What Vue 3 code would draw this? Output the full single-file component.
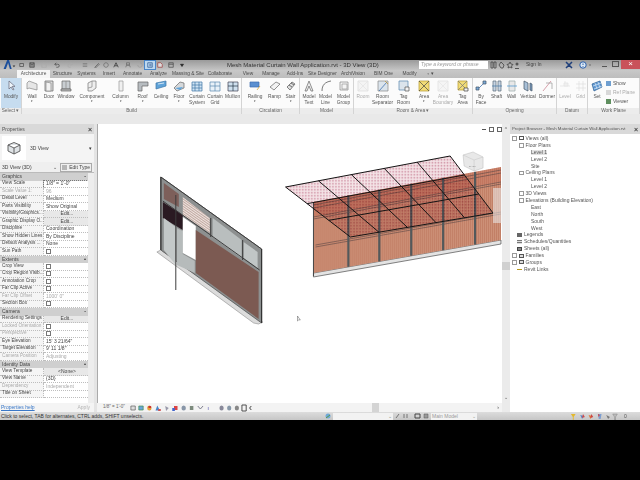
<template>
  <div class="app">
    <div class="titlebar">
      <svg class="logo" viewBox="0 0 14 10"><path d="M1 10 5 0h2l3 10H8L6 3 3.500 10z" fill="#1c4f9c"/><path d="M11 6h3l-1.500 2z" fill="#333"/></svg>
      <div class="qat">
        <span v-for="q in qat" :key="q.x" class="qat-icon" :class="{ on: q.on }" :style="{ width: q.w + 'px', background: q.on ? '#bcd8f0' : '' }">
          <svg viewBox="0 0 8 8"><path :d="q.d" :fill="q.f || 'none'" :stroke="q.s || '#444'" stroke-width="0.9"/></svg>
        </span>
      </div>
      <div class="doc-title">Mesh Material Curtain Wall Application.rvt - 3D View (3D)</div>
      <div class="search"><i>Type a keyword or phrase</i></div>
      <div class="info">
        <svg viewBox="0 0 30 8" width="30" height="8"><path d="M1 1h2v6H1zM4 1h2v6H4zM11 1l3 3-1 3h-2L9 4zM20 1l1 2 2 .500-1.500 1.500.5 2-2-1-2 1 .5-2L17 3.500l2-.5z" fill="none" stroke="#444" stroke-width=".8"/><circle cx="27" cy="3" r="1.500" fill="#555"/><path d="M25 7.500h4" stroke="#555"/></svg>
        <span>Sign In</span>
      </div>
      <svg class="x-mark" viewBox="0 0 28 8" width="28" height="8"><path d="M2 1l3 3-3 3M8 1 5 4l3 3" stroke="#1f3f7a" fill="none" stroke-width="1.500"/><circle cx="19" cy="4" r="3.200" fill="#dbe7f3" stroke="#2a5ea8"/><path d="M19 2.500v1.500M19 5v.800" stroke="#2a5ea8"/><circle cx="26" cy="4" r=".7" fill="#555"/></svg>
      <div class="win-btns">
        <span class="min"></span>
        <span class="max"></span>
        <span class="close">×</span>
      </div>
    </div>

    <div class="tabs">
      <span v-for="t in tabs" :key="t.n" class="tab" :class="{ active: t.n === 'Architecture' }" :style="{ width: t.w + 'px' }">{{ t.n }}</span>
    </div>

    <div class="ribbon">
      <div v-for="p in panels" :key="p.name" class="panel" :style="{ width: p.w + 'px' }">
        <div class="tools">
          <div v-for="t in p.tools" :key="t.l + t.i" class="tool" :class="{ sel: t.l === 'Modify', off: t.off }" :style="{ width: t.w + 'px' }">
            <svg class="tool-icon" viewBox="0 0 12 12" width="12" height="12">
              <path v-for="(s, i) in icons[t.i]" :key="i" :d="s[0]" :fill="s[1]" :stroke="s[2]" stroke-width="0.7"/>
            </svg>
            <span class="tool-label">{{ t.l }}</span>
            <span v-if="t.l2" class="tool-label">{{ t.l2 }}</span>
            <span v-if="t.more" class="more">▾</span>
          </div>
          <div v-if="p.name === 'Work Plane'" class="wp-list">
            <span><b class="sq blue"></b>Show</span>
            <span class="off"><b class="sq grey"></b>Ref Plane</span>
            <span><b class="sq green"></b>Viewer</span>
          </div>
        </div>
        <div class="panel-label">{{ p.name }}</div>
      </div>
    </div>

    <div class="strip"></div>

    <div class="main">
      <aside class="props">
        <div class="pane-head"><span>Properties</span><b>×</b></div>
        <div class="type-sel">
          <div class="type-thumb">
            <svg viewBox="0 0 14 14" width="14" height="14"><path d="M7 1.500 13 4v6l-6 3-6-3V4z M1 4l6 3 6-3M7 7v6" fill="#dfe3e6" stroke="#555" stroke-width=".9"/></svg>
          </div>
          <span>3D View</span>
          <em>▾</em>
        </div>
        <div class="inst">
          <span>3D View (3D)</span>
          <em>⌄</em>
          <span class="edit-type"><b class="sq grey"></b>Edit Type</span>
        </div>
        <div class="grid">
          <div class="rows">
            <div v-for="r in rows" :key="r.n" class="row" :class="{ head: r.h, muted: r.m }">
              <template v-if="r.h">
                <span>{{ r.n }}</span>
                <em>{{ r.h === 2 ? '▴' : '▪' }}</em>
              </template>
              <template v-else>
                <span class="cell name">{{ r.n }}</span>
                <span class="cell val" :class="{ btn: r.b, white: r.w }">
                  <b v-if="r.c" class="check"></b>
                  {{ r.v }}
                </span>
              </template>
            </div>
          </div>
          <div class="vscroll"></div>
        </div>
        <div class="prop-foot">
          <span class="help">Properties help</span>
          <span class="apply">Apply</span>
        </div>
      </aside>

      <section class="view">
        <div class="canvas">
          <svg class="model" viewBox="97 124 405 279" preserveAspectRatio="none">
            <defs>
              <pattern id="stripes" width="2" height="4" patternUnits="userSpaceOnUse">
                <rect width="2" height="4" fill="#cd9178"/>
                <rect width="0.8" height="4" fill="#c07a62"/>
              </pattern>
              <pattern id="hatch" width="1.500" height="1.500" patternUnits="userSpaceOnUse">
                <rect width="1.500" height="1.500" fill="#f4e4e7"/>
                <rect width=".75" height=".75" fill="#cf8fa2"/>
              </pattern>
              <pattern id="lines" width="3" height="2" patternUnits="userSpaceOnUse" patternTransform="rotate(35)">
                <rect width="3" height="2" fill="#efe4e0"/>
                <rect width="3" height=".8" fill="#b59a92"/>
              </pattern>
            </defs>

            <!-- left wall -->
            <polygon points="156,252 160,250 262,322 258,324 253,323" fill="#dcdcdc" stroke="#777" stroke-width=".5"/>
            <polygon points="160,177 261,249 261,323 160,250" fill="#8d9090" stroke="#4a4a4a" stroke-width=".7"/>
            <polygon points="163,183 178,194 178,207 163,199" fill="#7d5f5a"/>
            <polygon points="162,202 182,215 182,230 162,218" fill="#2a1a22"/>
            <polygon points="163,218 175,227 175,265 163,250" fill="#c3c8c8"/>
            <polygon points="176,228 182,231 182,254 194,261 194,273 176,265" fill="#b6bbbb"/>
            <polygon points="182,197 209,218 209,233 182,215" fill="url(#lines)"/>
            <polygon points="182,217 195,226 195,260 182,253" fill="#ffffff"/>
            <polygon points="195,230 258,272 258,319 195,273" fill="#7c5a52"/>
            <polygon points="212,218 241,240 241,258 212,237" fill="#b9bebe"/>
            <polygon points="243,242 257,252 257,268 243,258" fill="#c1c6c6"/>
            <path d="M160 177 261 249M175 195v95M210 218v19M242 240v20M162 201l97 69" fill="none" stroke="#3c3c3c" stroke-width="1"/>
            <path d="M160 177v73M261 249v74" fill="none" stroke="#333" stroke-width="1.200"/>

            <!-- right wall -->
            <polygon :points="wallBase" fill="#e3e3e3" stroke="#333" stroke-width=".6"/>
            <polygon :points="wallFace" fill="url(#stripes)"/>
            <polygon :points="wallUpper" fill="#c1604c" opacity=".3"/>
            <line v-for="(l, i) in transoms" :key="'t' + i" :x1="l[0]" :y1="l[1]" :x2="l[2]" :y2="l[3]" stroke="#5a4745" stroke-width=".6"/>
            <line v-for="x in mullions" :key="'m' + x" :x1="x" :y1="wallTop(x)" :x2="x" :y2="wallBottom(x)" stroke="#53595b" stroke-width="2.200"/>
            <line x1="313" y1="202" x2="313" y2="276" stroke="#444" stroke-width="1"/>

            <!-- canopy -->
            <polygon class="canopy-fill" points="285,187 450,156 493,213 350,237" fill="url(#hatch)"/>
            <line v-for="(l, i) in canopy" :key="'c' + i" :x1="l[0]" :y1="l[1]" :x2="l[2]" :y2="l[3]" stroke="#141414" stroke-width="1"/>

            <!-- view cube -->
            <polygon points="463,155 473,152 483,157 483,168 474,171 464,166" fill="#e8e8e8" stroke="#bbb" stroke-width=".5"/>
            <path d="M463 155l11 5 9-3M474 160v11" fill="none" stroke="#c4c4c4" stroke-width=".5"/>
            <text x="469" y="167" class="cube-text">BACK</text>
            <!-- nav bar -->
            <rect x="493" y="188" width="9" height="35" fill="#ececec" opacity=".55"/>
            <!-- cursor -->
            <path d="M297 316v5l1.300-1.200 1.500.200z" fill="#fff" stroke="#555" stroke-width=".5"/>
          </svg>
        </div>
        <div class="view-bar">
          <span class="scale">1/8" = 1'-0"</span>
          <svg viewBox="0 0 100 8" width="88" height="8" preserveAspectRatio="none">
            <path d="M1 2h5v4H1z" fill="#ddd" stroke="#555" stroke-width=".7"/>
            <path d="M10 2h5v4h-5z" fill="#6aa5d8" stroke="#3b8b4a" stroke-width=".7"/>
            <circle cx="22" cy="4" r="2.500" fill="#e3a03a"/><path d="M21 2h3v2h-3z" fill="#c33"/>
            <path d="M31 1.500l3 5h-5z" fill="#4a86c8"/><path d="M32 5h3v2h-3z" fill="#c55"/>
            <path d="M40 2l4 2-3 3z" fill="#99a" />
            <path d="M50 2h4v4h-4z" fill="#d44"/><path d="M48 4h3v3h-3z" fill="#46c"/>
            <circle cx="61" cy="4" r="2.500" fill="#8896a8"/>
            <path d="M68 2h4v4h-4z" fill="#7c8a7c"/>
            <path d="M77 2l3 3 3-3" fill="none" stroke="#778"/>
            <path d="M89 3v3" stroke="#99c"/>
          </svg>
          <svg viewBox="0 0 40 8" width="34" height="8" preserveAspectRatio="none">
            <circle cx="3" cy="4" r="2.500" fill="#889"/><circle cx="12" cy="4" r="2.500" fill="#8898a8"/><circle cx="21" cy="4" r="2.500" fill="#888"/><path d="M27 1h5v6h-5z" fill="none" stroke="#444"/><path d="M38 2l-2 2 2 2" fill="none" stroke="#333"/>
          </svg>
          <div class="hscroll"><b></b></div>
          <span class="arrow">›</span>
        </div>
      </section>

      <div class="gutter">
        <div class="view-ctrl"><span></span><span class="box"></span><span class="box"></span><span>^</span></div>
        <b></b>
        <em>⌄</em>
      </div>

      <aside class="browser">
        <div class="pane-head"><span>Project Browser - Mesh Material Curtain Wall Application.rvt</span><b>×</b></div>
        <div class="tree">
          <div v-for="(n, i) in tree" :key="i" class="node" :class="{ cur: n.cur }" :style="{ paddingLeft: n.x + 'px' }">
            <b v-if="n.e" class="exp"></b>
            <b v-if="n.k" class="ico" :class="n.k"></b>
            <span>{{ n.t }}</span>
          </div>
        </div>
      </aside>
    </div>

    <div class="status">
      <span class="status-text">Click to select, TAB for alternates, CTRL adds, SHIFT unselects.</span>
      <svg class="st-a" viewBox="0 0 6 6" width="6" height="6"><circle cx="3" cy="3" r="2.500" fill="#6fa8d8"/><path d="M1 5l4-3" stroke="#5a9a4a"/></svg>
      <span class="combo wide">⌄</span>
      <svg viewBox="0 0 34 6" width="34" height="6"><path d="M1 5l3-4M9 1v4M12 1v4" stroke="#777" fill="none"/><path d="M20 1h5v4h-5z" fill="none" stroke="#444"/><path d="M29 1h4v4h-4z" fill="#999" stroke="#555" stroke-width=".5"/></svg>
      <span class="combo model">Main Model<em>⌄</em></span>
      <svg class="st-f" viewBox="0 0 56 7" width="52" height="7" preserveAspectRatio="none">
        <path d="M1 1h5L4 4v3H3V4z" fill="#e3b92d"/><path d="M11 2l4 1-2 3z" fill="#5a86c8"/><path d="M14 1l2 3-3 1z" fill="#d04a4a"/>
        <path d="M20 2l4 1-2 3z" fill="#e07a3a"/><path d="M23 1l2 3-3 1z" fill="#c44"/>
        <path d="M30 1h4l-1 5h-2z" fill="#7d9ed0"/><path d="M30 1l2 1-1 2z" fill="#d33"/>
        <path d="M39 2l4 2-2 2z" fill="#777"/><path d="M46 1h5l-2 3v3h-1V4z" fill="#bbb" stroke="#777" stroke-width=".4"/>
      </svg>
      <span class="zero">0</span>
    </div>
  </div>
</template>

<script setup>
const qat = [
  { x: 1, w: 10, d: "M1 2h5v4H1z" },
  { x: 2, w: 10, d: "M1 1h6v6H1zM2.500 1v2h3V1", f: "#888" },
  { x: 3, w: 13, d: "M1 4a3 3 0 0 1 6 0v3H1z", s: "#aaa" },
  { x: 4, w: 13, d: "M1 3h4a2 2 0 0 1 0 4H3M1 3l2-2M1 3l2 2" },
  { x: 5, w: 14, d: "M7 3H3a2 2 0 0 0 0 4h2M7 3 5 1M7 3 5 5", s: "#aaa" },
  { x: 6, w: 15, d: "M1 2h6M1 4h6M1 6h6", s: "#777" },
  { x: 7, w: 9, d: "M1 7 6 2l1 1-5 5z", s: "#555" },
  { x: 8, w: 10, d: "M1 4c0-4 6-4 6 0s-6 4-6 0", s: "#666" },
  { x: 9, w: 10, d: "M1 7 4 1l3 6M2.500 5h3", s: "#222" },
  { x: 10, w: 14, d: "M2 1h4v3H2zM1 7a3 3 0 0 1 6 0", s: "#666" },
  { x: 11, w: 10, d: "M1 4a3 3 0 1 0 3-3", s: "#999" },
  { x: 12, w: 10, on: true, d: "M1 1h6v6H1zM3 3h3M3 5h3", s: "#234f8a" },
  { x: 13, w: 10, d: "M1 1h4l2 2v4H1z", f: "#ddd", s: "#933" },
  { x: 14, w: 12, d: "M1 1h6v6H1zM1 3h6", s: "#444" },
  { x: 15, w: 10, d: "M2 3h4L4 6z", f: "#222", s: "#222" },
];

const tabs = [
  { n: "Architecture", w: 33 }, { n: "Structure", w: 25 }, { n: "Systems", w: 23 }, { n: "Insert", w: 22 },
  { n: "Annotate", w: 25 }, { n: "Analyze", w: 27 }, { n: "Massing & Site", w: 32 }, { n: "Collaborate", w: 32 },
  { n: "View", w: 24 }, { n: "Manage", w: 22 }, { n: "Add-Ins", w: 26 }, { n: "Site Designer", w: 29 },
  { n: "ArchiVision", w: 32 }, { n: "BIM One", w: 29 }, { n: "Modify", w: 23 }, { n: "▫ ▾", w: 19 },
];

const G = "#b9b9b9", D = "#666", B = "#5fa3d9", W = "#f2f2f2", Y = "#f1dc78";
const icons = {
  arrow: [["M4 1v8l2-2 2 3 1-.6-2-3h3z", "#eef5fb", "#667"]],
  wall: [["M1 3 3 1l8 3v6l-8-2-2 1z", "#e6e6e6", "#888"]],
  door: [["M2 1h8v10H2z", "#ddd", D], ["M3 2l5 1v8H3z", W, "#888"]],
  window: [["M2 1h8v8H2z", "#c9ced2", D], ["M1 9h10v2H1z", G, D], ["M6 1v8", "none", "#888"]],
  comp: [["M2 3l4-2h4v7l-4 3H2z", "#eee", "#777"], ["M6 1v6l-4 1", "none", "#888"]],
  column: [["M4 1h4v10H4z", "#f0f0f0", "#999"]],
  roof: [["M1 2h10v4H5v5H1z", "#b7bcc0", D]],
  ceiling: [["M1 3 11 1v5L1 9z", B, "#3f77a8"], ["M3 4l6-1", "none", "#fff"]],
  floor: [["M1 8l6-6 4 1v5l-7 3z", "#d5d8da", D], ["M2 8l8-1-3 3z", B, "none"]],
  curtsys: [["M1 2h10v9H1z", "#cfe3f3", "#3f77a8"], ["M4 2v9M8 2v9M1 5h10M1 8h10", "none", "#3f77a8"]],
  curtgrid: [["M1 2h10v9H1z", "#e8f1f8", "#5a88b0"], ["M6 2v9M1 6h10", "none", "#5a88b0"]],
  mullion: [["M1 2h10v9H1z", "#cfe0ee", "#445"], ["M6 2v9M1 6h10", "none", "#234"]],
  railing: [["M1 2h9v5H1z", "#5b8fd0", "#3f6fb0"], ["M8 10l3-4", "none", "#d99a20"]],
  ramp: [["M1 7l6-5 4 2-6 6z", W, "#666"]],
  stair: [["M2 7l5-5 3 2-5 6z", "#ddd", "#555"], ["M4 5l3 2M6 3l3 2", "none", "#444"]],
  text: [["M2 11 6 1l4 10H8L6 6l-2 5z", "#eee", "#666"]],
  line: [["M2 11c0-6 3-9 9-10", "none", "#444"]],
  group: [["M2 2h8v8H2z", "#f4f4f4", "#888"], ["M4 4h5v5H4z", "none", "#999"]],
  room: [["M1 1h10v10H1z", "#ededed", "#bbb"], ["M1 1l10 10M11 1 1 11", "none", "#ccc"]],
  sep: [["M1 1h10v10H1z", "#dbe4ec", "#888"], ["M2 11 10 2", "none", "#2f64a8"], ["M8 1l3 3", "none", "#c89628"]],
  tagroom: [["M1 1h9v9H1z", "#dbe4ec", "#5a88b0"], ["M7 7h4v4H7z", W, "#555"]],
  area: [["M1 1h10v10H1z", Y, "#b59a2d"], ["M1 1l10 10M11 1 1 11", "none", "#444"]],
  bound: [["M1 1h10v10H1z", "#efefef", "#c4c4c4"], ["M1 1l10 10M11 1 1 11", "none", "#d0d0d0"]],
  tagarea: [["M1 1h9v9H1z", Y, "#b59a2d"], ["M1 1l9 9M10 1 1 10", "none", "#777"], ["M7 8h4v3H7z", W, "#444"]],
  byface: [["M2 10 10 2", "none", "#2f64a8"], ["M1 7h3v3H1zM8 1h3v3H8z", "#7aa9d8", "#456"]],
  shaft: [["M2 1h3v10H2zM7 1h3v10H7z", "#c7d5e3", "#5a6a7a"], ["M1 6h10", "none", "#3f77a8"]],
  opwall: [["M3 1h6v10H3z", "#e8e8e8", "#9aa"], ["M1 6h10", "none", "#3f8fd0"]],
  vert: [["M2 1l4 2v8L2 9z", "#a8c0d8", "#456"], ["M8 3l2 1v7l-2-1z", "#7f9fc0", "#456"]],
  dormer: [["M2 11 10 1", "none", "#c77a8a"], ["M5 3h6v6", "none", "#999"]],
  level: [["M1 6h10M6 1v3", "none", "#ccc"], ["M5 3h4v3H5z", "#e4e4e4", "#ccc"]],
  dgrid: [["M1 4h10M1 8h10M4 1v10M8 1v10", "none", "#c4c4c4"]],
  set: [["M1 4 9 1l2 6-8 4z", "#5f98d2", "#2a5e94"], ["M4 3l2 6M7 2l2 6M2 6l8-3M3 9l8-3", "none", "#d7e7f5"]],
};

const t = (l, w, i, more, l2, off) => ({ l, w, i, more, l2, off });
const panels = [
  { name: "Select ▾", w: 22, tools: [t("Modify", 20, "arrow")] },
  { name: "Build", w: 220, tools: [
    t("Wall", 20, "wall", 1), t("Door", 14, "door"), t("Window", 20, "window"), t("Component", 32, "comp", 1),
    t("Column", 25, "column", 1), t("Roof", 19, "roof", 1), t("Ceiling", 18, "ceiling"), t("Floor", 18, "floor", 1),
    t("Curtain", 18, "curtsys", 0, "System"), t("Curtain", 18, "curtgrid", 0, "Grid"), t("Mullion", 17, "mullion"),
  ] },
  { name: "Circulation", w: 58, tools: [t("Railing", 26, "railing", 1), t("Ramp", 13, "ramp"), t("Stair", 19, "stair", 1)] },
  { name: "Model", w: 54, tools: [t("Model", 18, "text", 0, "Text"), t("Model", 15, "line", 0, "Line"), t("Model", 21, "group", 0, "Group")] },
  { name: "Room & Area ▾", w: 119, tools: [
    t("Room", 18, "room", 0, "", 1), t("Room", 21, "sep", 0, "Separator"), t("Tag", 21, "tagroom", 0, "Room"),
    t("Area", 20, "area", 1), t("Area", 18, "bound", 0, "Boundary", 1), t("Tag", 21, "tagarea", 0, "Area"),
  ] },
  { name: "Opening", w: 84, tools: [t("By", 16, "byface", 0, "Face"), t("Shaft", 15, "shaft"), t("Wall", 15, "opwall"), t("Vertical", 18, "vert"), t("Dormer", 20, "dormer")] },
  { name: "Datum", w: 31, tools: [t("Level", 16, "level", 0, "", 1), t("Grid", 15, "dgrid", 0, "", 1)] },
  { name: "Work Plane", w: 52, tools: [t("Set", 18, "set")] },
];

const rows = [
  { n: "Graphics", h: 1 },
  { n: "View Scale", v: '1/8" = 1\'-0"', w: 1 },
  { n: "Scale Value    1:", v: "96", m: 1 },
  { n: "Detail Level", v: "Medium" },
  { n: "Parts Visibility", v: "Show Original" },
  { n: "Visibility/Graphics...", v: "Edit...", b: 1 },
  { n: "Graphic Display O...", v: "Edit...", b: 1 },
  { n: "Discipline", v: "Coordination" },
  { n: "Show Hidden Lines", v: "By Discipline" },
  { n: "Default Analysis ...", v: "None" },
  { n: "Sun Path", c: 1 },
  { n: "Extents", h: 2 },
  { n: "Crop View", c: 1 },
  { n: "Crop Region Visib...", c: 1 },
  { n: "Annotation Crop", c: 1 },
  { n: "Far Clip Active", c: 1 },
  { n: "Far Clip Offset", v: "1000'  0\"", m: 1 },
  { n: "Section Box", c: 1 },
  { n: "Camera", h: 1 },
  { n: "Rendering Settings", v: "Edit...", b: 1 },
  { n: "Locked Orientation", c: 1, m: 1 },
  { n: "Perspective", c: 1, m: 1 },
  { n: "Eye Elevation", v: "15'  3 21/64\"" },
  { n: "Target Elevation", v: "9'  11 1/8\"" },
  { n: "Camera Position", v: "Adjusting", m: 1 },
  { n: "Identity Data", h: 2 },
  { n: "View Template", v: "<None>", b: 1 },
  { n: "View Name", v: "{3D}" },
  { n: "Dependency", v: "Independent", m: 1 },
  { n: "Title on Sheet", v: "" },
];

const tree = [
  { t: "Views (all)", x: 2, e: 1, k: "views" },
  { t: "Floor Plans", x: 9, e: 1 },
  { t: "Level 1", x: 21, cur: 1 },
  { t: "Level 2", x: 21 },
  { t: "Site", x: 21 },
  { t: "Ceiling Plans", x: 9, e: 1 },
  { t: "Level 1", x: 21 },
  { t: "Level 2", x: 21 },
  { t: "3D Views", x: 9, e: 1 },
  { t: "Elevations (Building Elevation)", x: 9, e: 1 },
  { t: "East", x: 21 },
  { t: "North", x: 21 },
  { t: "South", x: 21 },
  { t: "West", x: 21 },
  { t: "Legends", x: 7, k: "dark" },
  { t: "Schedules/Quantities", x: 7, k: "sched" },
  { t: "Sheets (all)", x: 7, k: "sheet" },
  { t: "Families", x: 2, e: 1, k: "fam" },
  { t: "Groups", x: 2, e: 1, k: "fam" },
  { t: "Revit Links", x: 7, k: "link" },
];

const wallTop = (x) => 202 - (x - 313) * 0.186;
const wallBottom = (x) => 273 - (x - 313) * 0.1755;
const wallFace = `313,202 501,${wallTop(501)} 501,${wallBottom(501)} 313,273`;
const wallUpper = `313,202 501,${wallTop(501)} 501,182 313,217`;
const wallBase = `313,273 501,${wallBottom(501)} 501,${wallBottom(501) + 4} 313,277`;
const mullions = [348, 379, 411, 443, 475];
const transoms = [
  [313, 205, 501, 170], [313, 208, 501, 173],
  [313, 217, 501, 182], [313, 219, 501, 184],
  [315, 245, 501, 212], [315, 247, 501, 214],
];

const lerp = (a, b, k) => [a[0] + (b[0] - a[0]) * k, a[1] + (b[1] - a[1]) * k];
const corners = { a: [285, 187], b: [450, 156], c: [493, 213], d: [350, 237] };
const canopy = [];
for (let i = 0; i <= 5; i++) {
  const p = lerp(corners.a, corners.b, i / 5);
  const q = lerp(corners.d, corners.c, i / 5);
  canopy.push([p[0], p[1], q[0], q[1]]);
}
for (let i = 0; i <= 3; i++) {
  const p = lerp(corners.a, corners.d, i / 3);
  const q = lerp(corners.b, corners.c, i / 3);
  canopy.push([p[0], p[1], q[0], q[1]]);
}
</script>

<style scoped>
.app {
  width: 640px;
  height: 480px;
  box-sizing: border-box;
  padding: 60px 0;
  background: #000;
  display: flex;
  flex-direction: column;
  overflow: hidden;
  font-family: "Liberation Sans", Arial, sans-serif;
  font-size: 5px;
  line-height: 1;
  color: #444;
  filter: blur(0.3px);
}

.titlebar {
  height: 9px;
  padding-bottom: 1px;
  background: linear-gradient(#9a9a9a, #c4c4c4);
  display: flex;
  align-items: center;
  position: relative;
}
.logo { width: 14px; height: 9px; margin-left: 2px; flex: none; }
.qat { display: flex; margin-left: 1px; width: 180px; }
.qat-icon { display: flex; justify-content: center; align-items: center; height: 8px; }
.qat-icon svg { width: 6px; height: 6px; }
.qat-icon.on { outline: 0.5px solid #4a86c8; }
.doc-title { position: absolute; left: 227px; font-size: 6px; color: #333; white-space: nowrap; }
.search {
  position: absolute;
  left: 419px;
  width: 69px;
  height: 8px;
  background: #fff;
  color: #999;
  display: flex;
  align-items: center;
  padding-left: 2px;
  box-sizing: border-box;
}
.info { position: absolute; left: 490px; display: flex; align-items: center; gap: 6px; color: #444; }
.x-mark { position: absolute; left: 564px; }
.win-btns { margin-left: auto; display: flex; height: 9px; }
.win-btns span { display: block; }
.min { width: 12px; position: relative; }
.min::after { content: ""; position: absolute; left: 3px; top: 6px; width: 5px; height: 1px; background: #555; }
.max { width: 10px; position: relative; }
.max::after { content: ""; position: absolute; left: 1px; top: 1px; width: 5px; height: 4px; border: 1px solid #555; }
.close { width: 19px; background: #c9525a; color: #fff; text-align: center; font-size: 8px; }

.tabs {
  height: 8px;
  padding-left: 17px;
  background: linear-gradient(#c8c8c8, #bdbdbd);
  display: flex;
}
.tab {
  flex: none;
  text-align: center;
  line-height: 8px;
  font-size: 4.800px;
  white-space: nowrap;
  color: #4a4a4a;
}
.tab.active { background: #f6f6f6; color: #555; }

.ribbon { height: 36px; display: flex; background: #fbfbfb; }
.panel {
  flex: none;
  display: flex;
  flex-direction: column;
  box-sizing: border-box;
  border-right: 1px solid #d4d4d4;
}
.tools { height: 30px; display: flex; }
.tool {
  flex: none;
  display: flex;
  flex-direction: column;
  align-items: center;
  padding-top: 2px;
  box-sizing: border-box;
  position: relative;
}
.tool.sel { background: #c6dcef; margin-left: 1px; }
.tool.off { opacity: 0.5; }
.tool-icon { margin-bottom: 2px; }
.tool-label { font-size: 4.800px; line-height: 6px; white-space: nowrap; color: #555; }
.more { font-size: 3px; line-height: 3px; color: #333; }
.panel-label {
  flex: 1;
  background: #ececec;
  text-align: center;
  line-height: 6px;
  font-size: 4.800px;
  color: #666;
}
.wp-list { display: flex; flex-direction: column; gap: 4px; padding-top: 3px; color: #555; white-space: nowrap; }
.wp-list .off { opacity: 0.5; }
.sq { display: inline-block; width: 5px; height: 5px; margin-right: 2px; vertical-align: -1px; }
.sq.blue { background: #6f9fd0; }
.sq.grey { background: #b5b5b5; }
.sq.green { background: #5f8f5f; }

.strip { height: 10px; background: #e9e9e9; }

.main { flex: 1; min-height: 0; display: flex; background: #e4e4e4; }

.props { width: 94px; flex: none; display: flex; flex-direction: column; background: #f1f1f1; }
.pane-head {
  height: 10px;
  padding: 0 2px;
  background: #d9d9d9;
  display: flex;
  align-items: center;
  justify-content: space-between;
  white-space: nowrap;
  color: #555;
}
.pane-head b { font-size: 7px; color: #444; }
.type-sel { height: 28px; display: flex; align-items: center; gap: 4px; background: #f4f4f4; position: relative; }
.type-thumb { width: 24px; height: 24px; margin-left: 2px; background: #fff; display: flex; align-items: center; justify-content: center; }
.type-sel em { position: absolute; right: 2px; font-style: normal; color: #333; }
.inst { height: 11px; display: flex; align-items: center; padding-left: 2px; background: #efefef; border-bottom: 0.5px solid #bbb; box-sizing: border-box; }
.inst em { margin-left: auto; font-style: normal; }
.edit-type { margin-left: 3px; margin-right: 2px; padding: 1px; border: 0.5px solid #aaa; }
.grid { height: 229.500px; display: flex; overflow: hidden; background: #fff; }
.rows { width: 88px; flex: none; }
.vscroll { flex: 1; background: #ededed; }
.row { height: 7.500px; display: flex; align-items: center; }
.row.head { background: #cfcfcf; padding: 0 2px; justify-content: space-between; color: #444; }
.row.head em { font-style: normal; font-size: 4px; }
.row.muted { color: #aaa; }
.cell { height: 100%; box-sizing: border-box; display: flex; align-items: center; white-space: nowrap; border-bottom: 0.5px dotted #bdbdbd; }
.name { width: 44px; flex: none; padding-left: 2px; background: #f5f5f5; border-right: 0.5px dotted #bdbdbd; font-size: 4.700px; }
.val { flex: 1; padding-left: 2px; background: #fff; }
.val.btn { justify-content: center; background: #e8e8e8; }
.val.white { outline: 0.5px dotted #777; outline-offset: -0.5px; }
.check { width: 3px; height: 3px; border: 0.5px solid #777; background: #fff; }
.prop-foot { flex: 1; display: flex; align-items: center; justify-content: space-between; padding: 0 4px 0 1px; background: #f4f4f4; }
.help { color: #3a78c8; text-decoration: underline; }
.apply { color: #b5b5b5; }

.view { width: 405px; flex: none; margin-left: 3px; display: flex; flex-direction: column; background: #fff; }
.canvas { flex: 1; min-height: 0; border-left: 0.5px solid #aaa; }
.model { display: block; width: 100%; height: 100%; }
.canopy-fill { mix-blend-mode: multiply; }
.cube-text { font-size: 2.500px; fill: #888; font-family: "Liberation Sans", sans-serif; }
.view-bar {
  height: 9px;
  flex: none;
  display: flex;
  align-items: center;
  background: #f3f3f3;
  padding-left: 6px;
  gap: 1px;
}
.scale { width: 26px; flex: none; color: #666; font-size: 4.500px; white-space: nowrap; }
.hscroll { flex: 1; height: 100%; position: relative; }
.hscroll b { position: absolute; left: 118px; top: 0; width: 7px; height: 100%; background: #d4d4d4; }
.arrow { margin-right: 3px; color: #333; }

.gutter { width: 8px; flex: none; background: #ebebeb; position: relative; }
.gutter b { position: absolute; left: 0; top: 138px; width: 8px; height: 8px; background: #d0d0d0; }
.gutter em { position: absolute; left: 2px; bottom: 12px; font-style: normal; color: #555; }
.view-ctrl { position: absolute; top: 3px; right: 3px; display: flex; gap: 3px; align-items: center; color: #555; }
.view-ctrl span:first-child { width: 4px; height: 1px; background: #555; }
.view-ctrl .box { width: 3px; height: 3px; border: 0.5px solid #666; }

.browser { flex: 1; min-width: 0; overflow: hidden; display: flex; flex-direction: column; background: #fff; }
.browser .pane-head span { font-size: 4.300px; }
.tree { padding-top: 1px; }
.node { height: 6.900px; display: flex; align-items: center; gap: 2px; color: #555; white-space: nowrap; }
.node.cur span { background: #e2e2e2; }
.exp { width: 2.500px; height: 2.500px; border: 0.5px solid #999; flex: none; }
.ico { width: 5px; height: 4px; flex: none; box-sizing: border-box; }
.ico.views { border: 0.5px solid #555; }
.ico.dark { background: #666; }
.ico.sched { background: repeating-linear-gradient(#777 0 1px, #ddd 1px 2px); }
.ico.sheet { background: #888; border: 0.5px solid #444; }
.ico.fam { border: 0.5px solid #555; background: #ddd; }
.ico.link { height: 1px; background: #b89a20; }

.status {
  height: 8px;
  flex: none;
  background: linear-gradient(#dcdcdc, #c6c6c6);
  display: flex;
  align-items: center;
  gap: 2px;
  position: relative;
  color: #333;
  white-space: nowrap;
}
.status-text { width: 322px; padding-left: 1px; flex: none; }
.combo { height: 7px; background: #f2f2f2; display: flex; align-items: center; justify-content: flex-end; padding-right: 1px; box-sizing: border-box; color: #888; }
.combo.wide { width: 60px; }
.combo.model { width: 46px; justify-content: space-between; padding-left: 1px; color: #999; }
.combo em { font-style: normal; }
.st-f { margin-left: 91px; }
.zero { color: #555; }
</style>
<style>
html, body { margin: 0; background: #000; }
</style>
